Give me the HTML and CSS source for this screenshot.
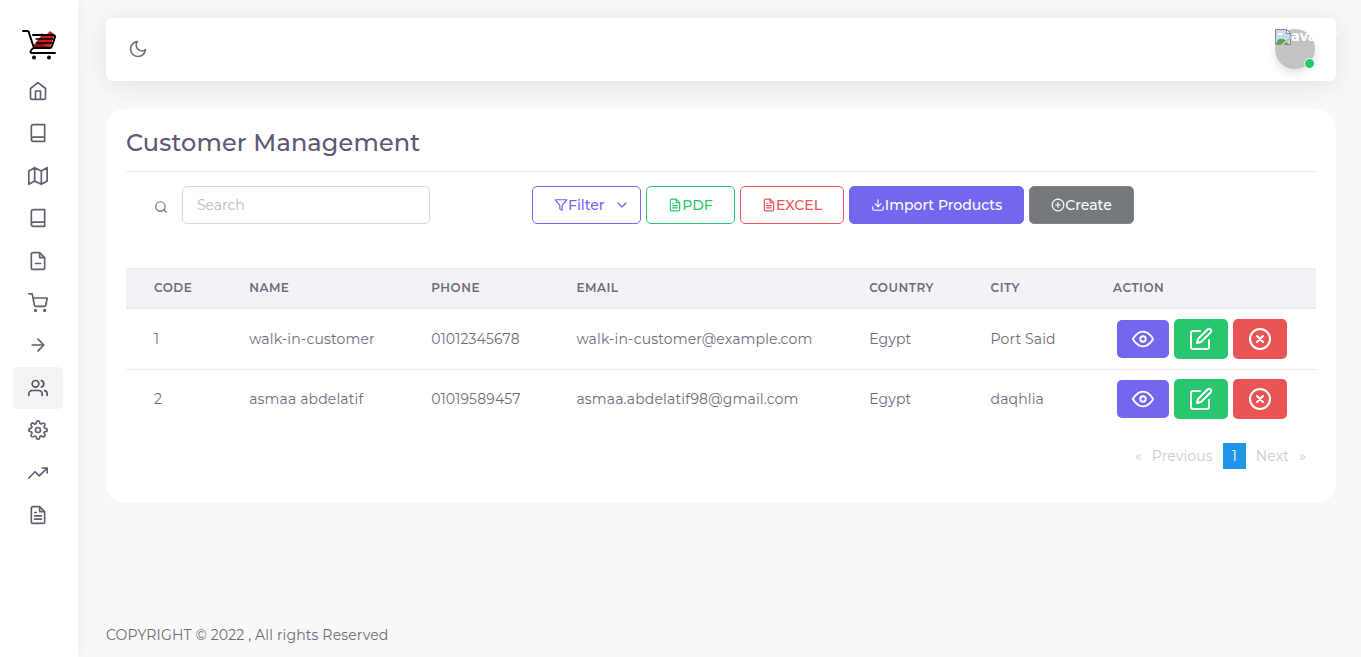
FILE: index.html
```html
<!DOCTYPE html>
<html lang="en">
<head>
<meta charset="utf-8">
<meta name="viewport" content="width=device-width, initial-scale=1">
<title>Customer Management</title>
<link rel="stylesheet" href="styles.css">
</head>
<body>
<svg class="sprite" aria-hidden="true">
  <symbol id="book" viewBox="0 0 24 24"><path d="M4 19.5A2.5 2.5 0 0 1 6.500 17H20M6.500 2H20v20H6.500A2.500 2.500 0 0 1 4 19.500v-15A2.500 2.500 0 0 1 6.500 2z"/></symbol>
  <symbol id="file-text" viewBox="0 0 24 24"><path d="M14 2H6a2 2 0 0 0-2 2v16a2 2 0 0 0 2 2h12a2 2 0 0 0 2-2V8zM14 2v6h6M16 13H8M16 17H8M10 9H8"/></symbol>
  <symbol id="eye" viewBox="0 0 24 24"><path d="M1 12s4-8 11-8 11 8 11 8-4 8-11 8-11-8-11-8z"/><circle cx="12" cy="12" r="3"/></symbol>
  <symbol id="edit" viewBox="0 0 24 24"><path d="M11 4H4a2 2 0 0 0-2 2v14a2 2 0 0 0 2 2h14a2 2 0 0 0 2-2v-7"/><path d="M18.500 2.500a2.121 2.121 0 0 1 3 3L12 15l-4 1 1-4z"/></symbol>
  <symbol id="x-circle" viewBox="0 0 24 24"><circle cx="12" cy="12" r="10"/><path d="M15 9l-6 6M9 9l6 6"/></symbol>
</svg>
<div class="app">
  <aside class="sidebar">
    <a class="brand" href="#" aria-label="Store home">
      <svg class="logo" viewBox="0 0 34 32" aria-hidden="true">
        <path class="logo-red" d="M11 17L18 8l3-3 2 2 5-5 4 3v2l-4 11H11z"/>
        <path class="logo-dark" d="M12 18l4-6 9 6zM18 7l2-3 2 3z"/>
        <path class="logo-line" d="M1 2h4q2 0 2 2l5 15h16q1 0 2-2l3-9q0-2-2-2H11M11.500 19q-3 2-3 3.500T10 24h23"/>
        <path class="logo-rung" d="M14 10h17M15 14h15"/>
        <circle cx="12" cy="28.500" r="2"/><circle cx="27" cy="28.500" r="2"/>
      </svg>
    </a>
    <nav class="nav" aria-label="Main">
      <a href="#" aria-label="Home"><svg class="icon" viewBox="0 0 24 24"><path d="M3 9l9-7 9 7v11a2 2 0 0 1-2 2H5a2 2 0 0 1-2-2zM9 22V12h6v10"/></svg></a>
      <a href="#" aria-label="Products"><svg class="icon"><use href="#book"/></svg></a>
      <a href="#" aria-label="Warehouses"><svg class="icon" viewBox="0 0 24 24"><path d="M1 6v16l7-4 8 4 7-4V2l-7 4-8-4zM8 2v16M16 6v16"/></svg></a>
      <a href="#" aria-label="Catalog"><svg class="icon"><use href="#book"/></svg></a>
      <a href="#" aria-label="Expenses"><svg class="icon" viewBox="0 0 24 24"><path d="M14 2H6a2 2 0 0 0-2 2v16a2 2 0 0 0 2 2h12a2 2 0 0 0 2-2V8zM14 2v6h6M9 15h6"/></svg></a>
      <a href="#" aria-label="Sales"><svg class="icon" viewBox="0 0 24 24"><circle cx="9" cy="21" r="1"/><circle cx="20" cy="21" r="1"/><path d="M1 1h4l2.680 13.390a2 2 0 0 0 2 1.610h9.720a2 2 0 0 0 2-1.610L23 6H6"/></svg></a>
      <a href="#" aria-label="Returns"><svg class="icon" viewBox="0 0 24 24"><path d="M5 12h14M12 5l7 7-7 7"/></svg></a>
      <a class="active" href="#" aria-label="People" aria-current="page"><svg class="icon" viewBox="0 0 24 24"><path d="M17 21v-2a4 4 0 0 0-4-4H5a4 4 0 0 0-4 4v2"/><circle cx="9" cy="7" r="4"/><path d="M23 21v-2a4 4 0 0 0-3-3.870M16 3.130a4 4 0 0 1 0 7.750"/></svg></a>
      <a href="#" aria-label="Settings"><svg class="icon" viewBox="0 0 24 24"><circle cx="12" cy="12" r="3"/><path d="M19.400 15a1.650 1.650 0 0 0 .33 1.820l.06.06a2 2 0 1 1-2.830 2.830l-.06-.06a1.650 1.650 0 0 0-1.820-.33 1.650 1.650 0 0 0-1 1.510V21a2 2 0 0 1-4 0v-.09A1.650 1.650 0 0 0 9 19.400a1.650 1.650 0 0 0-1.820.33l-.06.06a2 2 0 1 1-2.830-2.830l.06-.06a1.650 1.650 0 0 0 .33-1.820 1.650 1.650 0 0 0-1.510-1H3a2 2 0 0 1 0-4h.09A1.650 1.650 0 0 0 4.600 9a1.650 1.650 0 0 0-.33-1.820l-.06-.06a2 2 0 1 1 2.830-2.830l.06.06a1.650 1.650 0 0 0 1.820.33H9a1.650 1.650 0 0 0 1-1.510V3a2 2 0 0 1 4 0v.09a1.650 1.650 0 0 0 1 1.510 1.650 1.650 0 0 0 1.820-.33l.06-.06a2 2 0 1 1 2.830 2.830l-.06.06a1.650 1.650 0 0 0-.33 1.820V9a1.650 1.650 0 0 0 1.510 1H21a2 2 0 0 1 0 4h-.09a1.650 1.650 0 0 0-1.510 1z"/></svg></a>
      <a href="#" aria-label="Statistics"><svg class="icon" viewBox="0 0 24 24"><path d="M23 6l-9.500 9.500-5-5L1 18M17 6h6v6"/></svg></a>
      <a href="#" aria-label="Reports"><svg class="icon"><use href="#file-text"/></svg></a>
    </nav>
  </aside>
  <div class="content">
    <header class="topbar">
      <button class="theme" type="button" aria-label="Dark mode"><svg class="icon" viewBox="0 0 24 24"><path d="M21 12.790A9 9 0 1 1 11.210 3 7 7 0 0 0 21 12.790z"/></svg></button>
      <a class="avatar" href="#">
        <svg class="broken" viewBox="0 0 16 16" aria-hidden="true">
          <path fill="#c7d9f8" stroke="#8b8b8b" d="M.5.5h11l4 4v11H.5z"/>
          <path fill="#fff" d="M3 6a2 2 0 0 1 3-2 2 2 0 0 1 2 2z"/>
          <path fill="#57a83c" d="M1 15q2-6 6-5 4 0 6 5z"/>
          <path fill="#fff" stroke="#8b8b8b" d="M11.500.5v4h4z"/>
          <path stroke="#c3c3c3" stroke-width="2" d="M7 16l9-8"/>
        </svg>
        <span class="alt">avatar</span>
        <span class="status"></span>
      </a>
    </header>
    <main class="card">
      <h1>Customer Management</h1>
      <div class="toolbar">
        <div class="search">
          <label for="q" aria-label="Search"><svg class="icon small" viewBox="0 0 24 24"><circle cx="11" cy="11" r="8"/><path d="M21 21l-4.350-4.350"/></svg></label>
          <input id="q" type="text" placeholder="Search">
        </div>
        <div class="buttons">
          <button class="btn filter" type="button"><svg class="icon small" viewBox="0 0 24 24"><path d="M22 3H2l8 9.460V19l4 2v-8.540z"/></svg>Filter<svg class="icon chevron" viewBox="0 0 24 24"><path d="M6 9l6 6 6-6"/></svg></button>
          <button class="btn pdf" type="button"><svg class="icon small"><use href="#file-text"/></svg>PDF</button>
          <button class="btn excel" type="button"><svg class="icon small"><use href="#file-text"/></svg>EXCEL</button>
          <button class="btn import" type="button"><svg class="icon small" viewBox="0 0 24 24"><path d="M21 15v4a2 2 0 0 1-2 2H5a2 2 0 0 1-2-2v-4M7 10l5 5 5-5M12 15V3"/></svg>Import Products</button>
          <button class="btn create" type="button"><svg class="icon small" viewBox="0 0 24 24"><circle cx="12" cy="12" r="10"/><path d="M12 8v8M8 12h8"/></svg>Create</button>
        </div>
      </div>
      <table class="customers">
        <colgroup><col class="c-code"><col class="c-name"><col class="c-phone"><col class="c-email"><col class="c-country"><col class="c-city"><col class="c-action"></colgroup>
        <thead><tr><th>Code</th><th>Name</th><th>Phone</th><th>Email</th><th>Country</th><th>City</th><th>Action</th></tr></thead>
        <tbody>
          <tr><td>1</td><td>walk-in-customer</td><td>01012345678</td><td>walk-in-customer@example.com</td><td>Egypt</td><td>Port Said</td>
            <td><div class="actions"><button class="act view" type="button" aria-label="View"><svg class="icon medium"><use href="#eye"/></svg></button><button class="act edit" type="button" aria-label="Edit"><svg class="icon large"><use href="#edit"/></svg></button><button class="act delete" type="button" aria-label="Delete"><svg class="icon large"><use href="#x-circle"/></svg></button></div></td></tr>
          <tr><td>2</td><td>asmaa abdelatif</td><td>01019589457</td><td>asmaa.abdelatif98@gmail.com</td><td>Egypt</td><td>daqhlia</td>
            <td><div class="actions"><button class="act view" type="button" aria-label="View"><svg class="icon medium"><use href="#eye"/></svg></button><button class="act edit" type="button" aria-label="Edit"><svg class="icon large"><use href="#edit"/></svg></button><button class="act delete" type="button" aria-label="Delete"><svg class="icon large"><use href="#x-circle"/></svg></button></div></td></tr>
        </tbody>
      </table>
      <nav class="pagination" aria-label="Pages"><a href="#">«</a><a href="#">Previous</a><a class="current" href="#" aria-current="page">1</a><a href="#">Next</a><a href="#">»</a></nav>
    </main>
    <footer class="footer">COPYRIGHT © 2022 , All rights Reserved</footer>
  </div>
</div>
</body>
</html>
```
FILE: styles.css
```css
* { box-sizing: border-box; }
body {
  margin: 0;
  background: #f8f8f8;
  color: #6e6b7b;
  font: 14px/22px Montserrat, Inter, "Open Sans", sans-serif;
  letter-spacing: 0.01em;
}
button, input { font: inherit; }
button { cursor: pointer; }
a { color: inherit; text-decoration: none; }
.sprite { position: absolute; width: 0; height: 0; }
.icon {
  display: block;
  flex: none;
  width: 20px;
  height: 20px;
  fill: none;
  stroke: currentColor;
  stroke-width: 2;
  stroke-linecap: round;
  stroke-linejoin: round;
}
.icon.small { width: 14px; height: 14px; }
.icon.medium { width: 22px; height: 22px; }
.icon.large { width: 24px; height: 24px; }

.app { display: flex; min-height: 100vh; }
.sidebar {
  flex: none;
  width: 78px;
  padding: 29px 13px 0;
  background: #fff;
  box-shadow: 0 0 15px rgba(34, 41, 47, .05);
}
.brand { display: block; padding: 0 9px; height: 41px; }
.logo { display: block; width: 34px; height: 32px; }
.logo-red { fill: #d01f1f; }
.logo-dark { fill: #851313; }
.logo-line, .logo-rung { fill: none; stroke: #000; stroke-width: 2; stroke-linecap: round; stroke-linejoin: round; }
.logo-rung { stroke-width: 1.4; }
.nav {
  display: flex;
  flex-direction: column;
  justify-content: space-between;
  width: 50px;
  height: 466px;
}
.nav a {
  display: flex;
  align-items: center;
  justify-content: center;
  height: 42px;
  border-radius: 5px;
  color: #625f6e;
}
.nav .active { background: #f4f4f5; color: #565360; }

.content {
  display: flex;
  flex: 1;
  flex-direction: column;
  min-width: 0;
  padding: 18px 25px 11px 28px;
}
.topbar {
  display: flex;
  align-items: center;
  justify-content: space-between;
  height: 63px;
  padding: 0 21px 1px 22px;
  border-radius: 6px;
  background: #fff;
  box-shadow: 0 4px 24px rgba(34, 41, 47, .1);
}
.theme { padding: 0; border: 0; background: none; color: #6e6b7b; }
.avatar {
  position: relative;
  display: flex;
  align-items: flex-start;
  width: 40px;
  height: 40px;
  border-radius: 50%;
  background: #c3c3c3;
  color: #fff;
  box-shadow: 0 4px 8px rgba(34, 41, 47, .14);
}
.broken { flex: none; width: 16px; height: 16px; fill: none; }
.alt { font-weight: 700; line-height: 14px; }
.status {
  position: absolute;
  right: 0;
  bottom: 0;
  width: 11px;
  height: 11px;
  border: 1px solid #fff;
  border-radius: 50%;
  background: #28c76f;
}

.card {
  margin-top: 28px;
  padding: 19px 20px 34px;
  border-radius: 20px;
  background: #fff;
}
h1 {
  margin: 0 0 14px;
  padding-bottom: 14px;
  border-bottom: 1px solid #ebe9f1;
  color: #5e5873;
  font-size: 24px;
  font-weight: 500;
  line-height: 29px;
}
.toolbar { display: flex; gap: 102px; padding-left: 28px; }
.search { display: flex; align-items: center; gap: 14px; }
.search label { padding-top: 4px; }
.search input {
  width: 248px;
  height: 38px;
  padding: 0 14px;
  border: 1px solid #d8d6de;
  border-radius: 5px;
  background: #fff;
  color: #6e6b7b;
}
.search input::placeholder { color: #b9b9c3; opacity: 1; }
.buttons { display: flex; gap: 5px; }
.btn {
  display: flex;
  align-items: center;
  justify-content: center;
  height: 38px;
  padding: 0;
  border: 1px solid currentColor;
  border-radius: 5px;
  background: #fff;
  font-weight: 500;
  white-space: nowrap;
}
.filter { justify-content: flex-start; width: 109px; padding-left: 21px; color: #7367f0; }
.chevron { width: 16px; height: 16px; margin-left: 9px; }
.pdf { width: 89px; color: #28c76f; }
.excel { width: 104px; color: #ea5455; }
.import { width: 175px; border-color: #7367f0; background: #7367f0; color: #fff; }
.create { width: 105px; border-color: #82868b; background: #75797e; color: #fff; }

.customers {
  width: 100%;
  margin-top: 44px;
  border-collapse: separate;
  border-spacing: 0;
  table-layout: fixed;
}
.c-code { width: 8%; }
.c-name { width: 15.3%; }
.c-phone { width: 12.2%; }
.c-email { width: 24.6%; }
.c-country { width: 10.2%; }
.c-city { width: 10.3%; }
th {
  height: 41px;
  padding: 0 0 0 28px;
  border-top: 1px solid #ebe9f1;
  border-bottom: 2px solid #ebe9f1;
  background: #f3f2f7;
  font-size: 12px;
  font-weight: 600;
  letter-spacing: 0.5px;
  text-align: left;
  text-transform: uppercase;
}
td { height: 58px; padding: 0 0 0 28px; white-space: nowrap; }
tbody tr:first-child td { height: 61px; border-bottom: 1px solid #ebe9f1; }
.actions { display: flex; align-items: center; gap: 5px; padding-left: 4px; }
.act {
  display: flex;
  align-items: center;
  justify-content: center;
  width: 54px;
  height: 40px;
  padding: 0;
  border: 0;
  border-radius: 5px;
  color: #fff;
}
.view { width: 52px; height: 38px; background: #7367f0; }
.edit { background: #28c76f; }
.delete { background: #ea5455; }

.pagination {
  display: flex;
  justify-content: flex-end;
  gap: 10px;
  margin-top: 15px;
  padding-right: 10px;
  color: #ccc;
  line-height: 26px;
}
.current { width: 23px; background: #2196e8; color: #fff; text-align: center; }
.footer { margin-top: auto; }
```
